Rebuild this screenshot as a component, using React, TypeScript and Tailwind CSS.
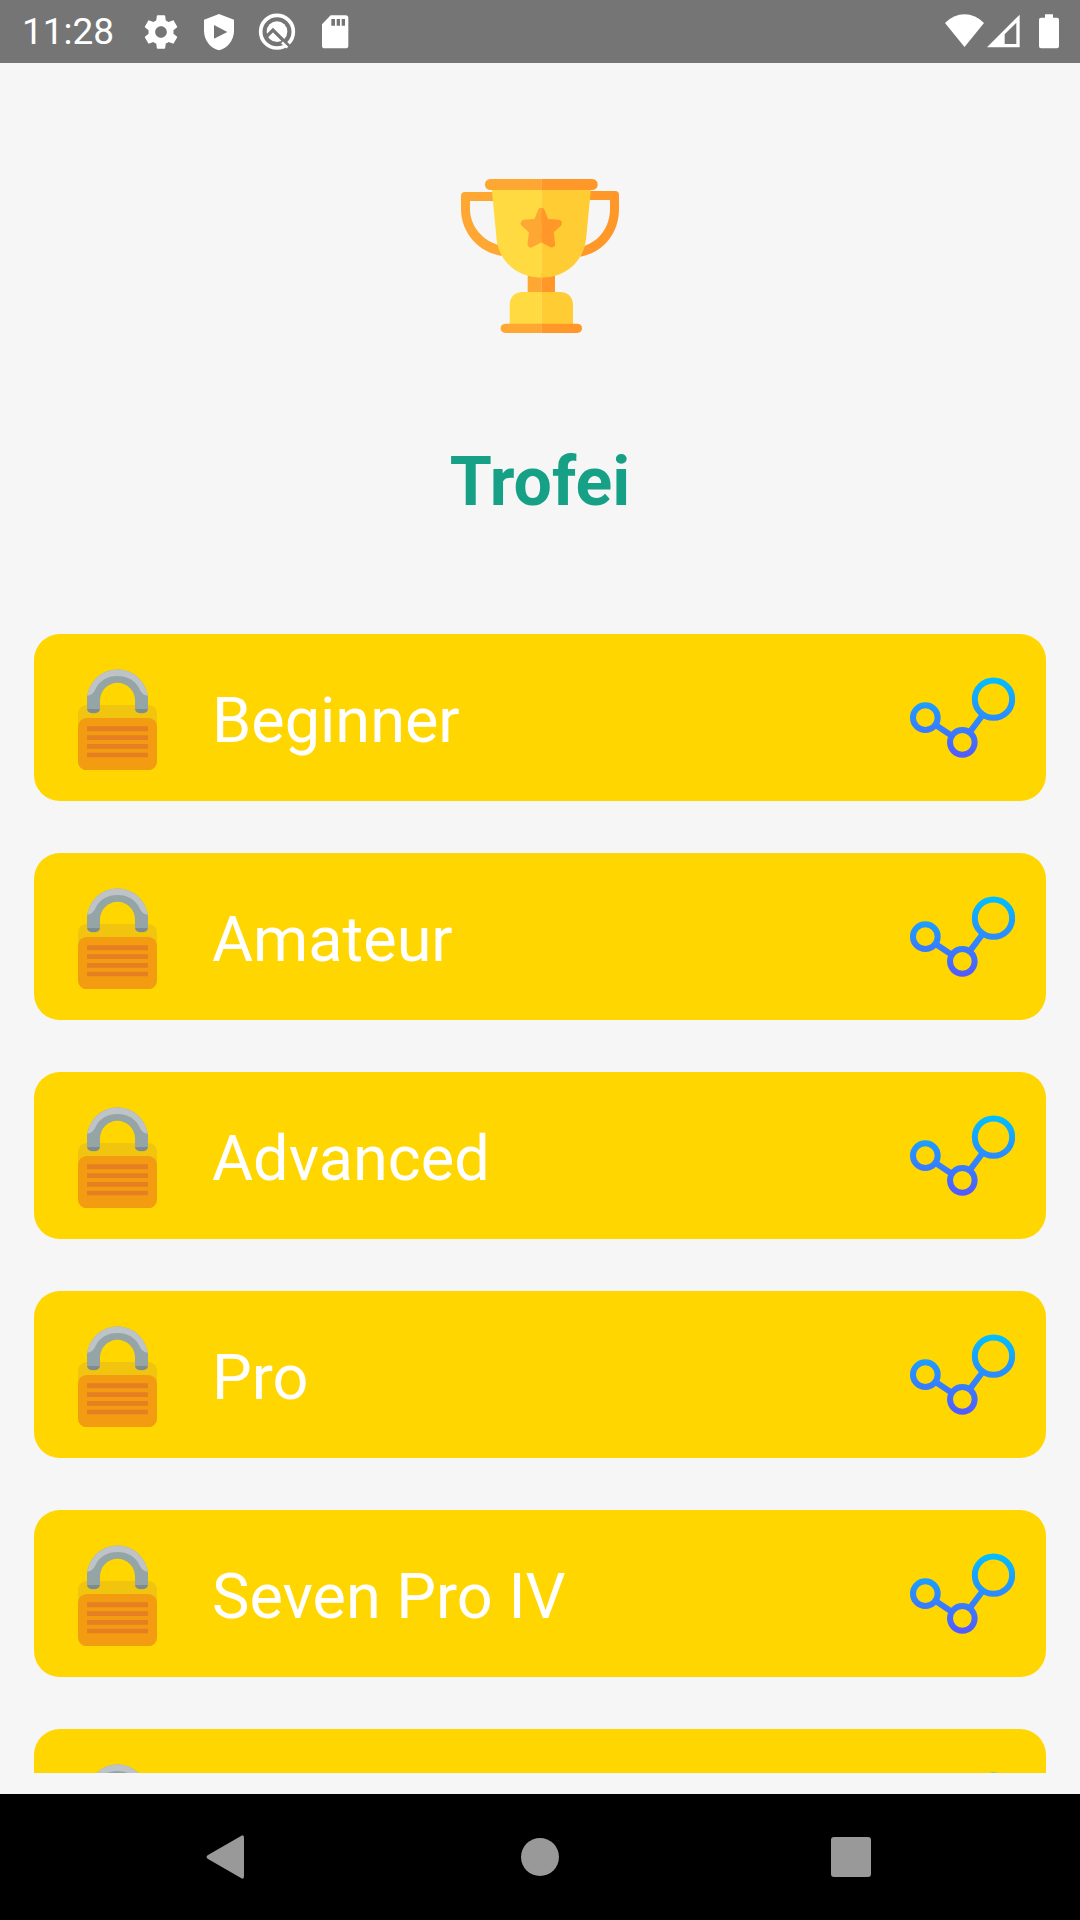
import React from 'react';

const trophies = [
  { id: 1, name: 'Beginner' },
  { id: 2, name: 'Amateur' },
  { id: 3, name: 'Advanced' },
  { id: 4, name: 'Pro' },
  { id: 5, name: 'Seven Pro IV' },
  { id: 6, name: '' },
];

const star =
  'M304 154 L317 187 L355 190 L330 213 L335 252 L304 235 L273 252 L278 213 L253 190 L291 187 Z';

const TrophyIcon = () => (
  <svg className="w-[158px] h-[156px]" viewBox="63 54 474 468" aria-hidden="true">
    <defs>
      <clipPath id="leftHalf">
        <rect x="0" y="0" width="304" height="570" />
      </clipPath>
      <clipPath id="rightHalf">
        <rect x="304" y="0" width="300" height="570" />
      </clipPath>
    </defs>
    <path d="M160 96H75Q63 96 63 108V147C63 220 118 279 188 288L180 256C130 244 90 200 90 147V123H160Z" fill="#ffa733" />
    <path d="M450 93H525Q537 93 537 105V147C537 220 490 278 421 290L434 257C478 243 510 200 510 147V120H450Z" fill="#ff9829" />
    <rect x="263" y="340" width="41" height="60" fill="#ffa733" />
    <rect x="304" y="340" width="41" height="60" fill="#ff9829" />
    <path d="M155 85H304V353C232 353 178 305 170 239Z" fill="#ffda40" />
    <path d="M304 85H453L438 239C428 308 374 353 304 353Z" fill="#ffcc33" />
    <path d="M304 57H151Q135 59 135 73.500Q135 88 151 90H304Z" fill="#ffa733" />
    <path d="M304 57H457Q473 59 473 73.500Q473 88 457 90H304Z" fill="#ff9829" />
    <path d="M304 396H249Q209 398 209 437V495H304Z" fill="#ffda40" />
    <path d="M304 396H359Q399 398 399 437V495H304Z" fill="#ffcc33" />
    <path d="M304 491H196Q182 492 182 505Q182 518 196 519H304Z" fill="#ffa733" />
    <path d="M304 491H412Q426 492 426 505Q426 518 412 519H304Z" fill="#ff9829" />
    <path d={star} clipPath="url(#leftHalf)" fill="#ffa733" stroke="#ffa733" strokeWidth="21" strokeLinejoin="round" />
    <path d={star} clipPath="url(#rightHalf)" fill="#ff9829" stroke="#ff9829" strokeWidth="21" strokeLinejoin="round" />
  </svg>
);

const LockIcon = () => (
  <svg className="w-[79px] h-[105px] shrink-0" viewBox="174 134 237 315" aria-hidden="true">
    <rect x="174" y="254" width="237" height="120" rx="26" fill="#f1c40f" />
    <path d="M201 262V239a91.500 91.500 0 0 1 183 0V262H345V240a52.500 52.500 0 0 0-105 0V262Z" fill="#95a5a5" />
    <path d="M201 239a91.500 91.500 0 0 1 183 0V226Q366 226 358 205C346 181 323 167 292.500 167S239 181 227 205Q219 226 201 226Z" fill="#bdc3c7" />
    <path d="M201 228V266H240V240M345 240V266H384V228Q370 226 360 211L345 232ZM201 228Q215 226 225 211L240 232V240Z" fill="#95a5a5" />
    <path d="M201 266H240Q238 279 220.500 279T201 266ZM345 266H384Q382 279 364.500 279T345 266Z" fill="#7f8c8d" />
    <rect x="174" y="293" width="237" height="157" rx="26" fill="#f39c12" />
    <path d="M201 318H384V333H201ZM201 345H384V359H201ZM201 371H384V385H201ZM201 397H384V411H201Z" fill="#e67e22" />
  </svg>
);

const ShareIcon = ({ id }: { id: number }) => (
  <svg className="w-[105px] h-[82px]" viewBox="90 170 315 246" aria-hidden="true">
    <defs>
      <linearGradient id={`share${id}`} gradientUnits="userSpaceOnUse" x1="0" y1="171" x2="0" y2="413">
        <stop offset="0" stopColor="#00c0ff" />
        <stop offset="1" stopColor="#5558ff" />
      </linearGradient>
    </defs>
    <g fill="none" stroke={`url(#share${id})`} strokeWidth="18">
      <circle cx="136" cy="292" r="37" />
      <circle cx="247" cy="366" r="37" />
      <circle cx="340.500" cy="236.500" r="56" />
      <path d="M168 315L213 345M271 333L308 284" />
    </g>
  </svg>
);

const StatusBar = () => (
  <div className="h-[63px] shrink-0 flex items-center justify-between bg-[#757575] text-white pl-[22px] pr-[21px]">
    <div className="flex items-center gap-[18px]">
      <span className="w-[101px] text-[37px] leading-[42px]">11:28</span>
      <svg className="size-[40px]" viewBox="0 0 24 24" fill="currentColor" aria-hidden="true">
        <path d="M19.430 12.980c.04-.32.07-.64.07-.98s-.03-.66-.07-.98l2.110-1.650c.19-.15.24-.42.12-.64l-2-3.460c-.12-.22-.39-.3-.61-.22l-2.490 1c-.52-.4-1.080-.73-1.690-.98l-.38-2.650C14.460 2.180 14.250 2 14 2h-4c-.25 0-.46.18-.49.42l-.38 2.650c-.61.25-1.170.59-1.690.98l-2.490-1c-.23-.09-.49 0-.61.22l-2 3.460c-.13.22-.07.49.12.64l2.110 1.650c-.04.32-.07.65-.07.98s.03.66.07.98l-2.110 1.650c-.19.15-.24.42-.12.64l2 3.460c.12.22.39.3.61.22l2.490-1c.52.4 1.080.73 1.690.98l.38 2.650c.03.24.24.42.49.42h4c.25 0 .46-.18.49-.42l.38-2.650c.61-.25 1.170-.59 1.690-.98l2.490 1c.23.09.49 0 .61-.22l2-3.460c.12-.22.07-.49-.12-.64l-2.110-1.650zM12 15.500c-1.930 0-3.500-1.570-3.500-3.500s1.570-3.500 3.500-3.500 3.500 1.570 3.500 3.500-1.570 3.500-3.500 3.500z" />
      </svg>
      <svg className="size-[40px]" viewBox="597 35 120 120" fill="currentColor" aria-hidden="true">
        <path fillRule="evenodd" d="M657 41L702 58V91C702 120 683 143 657 150C631 143 612 120 612 91V58ZM642 74V115L682 95Z" />
      </svg>
      <svg className="size-[40px]" viewBox="771 35 120 120" aria-hidden="true">
        <circle cx="831" cy="94" r="49" fill="none" stroke="currentColor" strokeWidth="11" />
        <circle cx="831" cy="94" r="31" fill="currentColor" />
        <path d="M797 111L819 89L868 138" fill="none" stroke="#757575" strokeWidth="10" />
        <path d="M846 126L862 142" fill="none" stroke="currentColor" strokeWidth="8" />
      </svg>
      <svg className="size-[40px]" viewBox="945 35 120 120" fill="currentColor" aria-hidden="true">
        <path fillRule="evenodd" d="M992 45H1037Q1045 45 1045 53V136Q1045 144 1037 144H974Q966 144 966 136V72ZM994 56V76H1005V56ZM1010 56V76H1020V56ZM1025 56V76H1035V56Z" />
      </svg>
    </div>
    <div className="flex items-center">
      <svg className="w-[39px] h-[40px] mr-[3px]" viewBox="75 35 117 120" fill="currentColor" aria-hidden="true">
        <path d="M75 68Q101 42 133.500 42T192 68L133.500 140Z" />
      </svg>
      <svg className="w-[33px] h-[40px] mr-[19px]" viewBox="202 35 99 120" fill="currentColor" aria-hidden="true">
        <path fillRule="evenodd" d="M202 141L300 43V141ZM255 102V131H290V67Z" />
      </svg>
      <svg className="w-[20px] h-[40px]" viewBox="357 35 60 120" fill="currentColor" aria-hidden="true">
        <path d="M375 42H399V52H411Q417 52 417 58V138Q417 144 411 144H363Q357 144 357 138V58Q357 52 363 52H375Z" />
      </svg>
    </div>
  </div>
);

const TrophyCard = ({ id, name }: { id: number; name: string }) => (
  <li className="h-[167px] shrink-0 flex items-center bg-[#ffd600] rounded-[26px] pl-[44px] pr-[31px]">
    <LockIcon />
    <span className="flex-1 ml-[55px] pt-[6px] text-[63px] leading-[76px] text-white">{name}</span>
    <button type="button" aria-label={`Condividi ${name}`}>
      <ShareIcon id={id} />
    </button>
  </li>
);

const NavigationBar = () => (
  <nav className="h-[126px] shrink-0 flex items-center justify-between bg-black text-[#999999] px-[19%]">
    <button type="button" aria-label="Indietro">
      <svg className="size-[48px]" viewBox="0 0 48 48" fill="currentColor">
        <path d="M36 3Q39 1 39 5V43Q39 47 36 45L3 26Q0 24 3 22Z" />
      </svg>
    </button>
    <button type="button" aria-label="Home">
      <svg className="size-[48px]" viewBox="0 0 48 48" fill="currentColor">
        <circle cx="24" cy="24" r="19" />
      </svg>
    </button>
    <button type="button" aria-label="Recenti">
      <svg className="size-[48px]" viewBox="0 0 48 48" fill="currentColor">
        <rect x="4" y="4" width="40" height="40" rx="3" />
      </svg>
    </button>
  </nav>
);

const App = () => {
  return (
    <div className="h-screen flex flex-col bg-[#f6f6f6] font-['Roboto',sans-serif]">
      <StatusBar />
      <header className="shrink-0 flex flex-col items-center pt-[115px] pb-[112px]">
        <TrophyIcon />
        <h1 className="mt-[108px] text-[68px] leading-[80px] font-bold text-[#16a085]">Trofei</h1>
      </header>
      <ul className="flex-1 min-h-0 overflow-hidden flex flex-col gap-[52px] mx-[34px] mb-[21px]">
        {trophies.map((trophy) => (
          <TrophyCard key={trophy.id} id={trophy.id} name={trophy.name} />
        ))}
      </ul>
      <NavigationBar />
    </div>
  );
};

export default App;
